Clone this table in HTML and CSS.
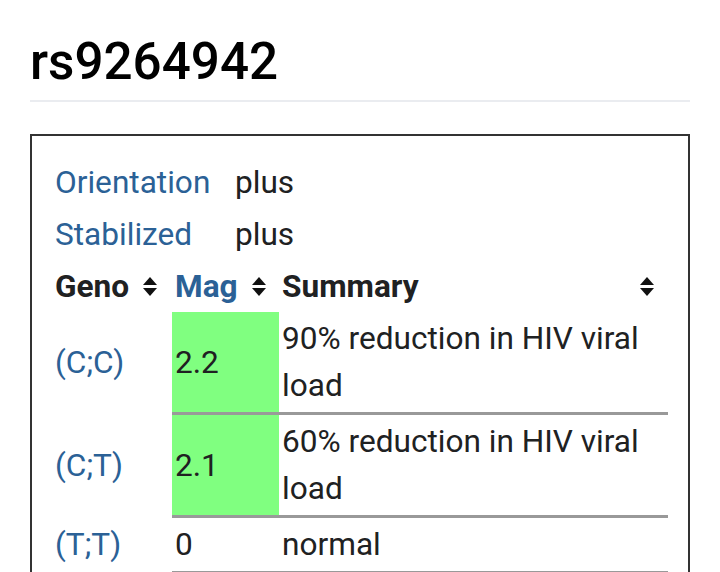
FILE: index.html
```html
<!DOCTYPE html>
<html>
<head>
<meta charset="utf-8">
<link rel="stylesheet" href="styles.css">
</head>
<body>
<h1 class="title">rs9264942</h1>
<div class="box">
  <div class="info">
    <a class="link label">Orientation</a><span class="val">plus</span>
    <a class="link label">Stabilized</a><span class="val">plus</span>
  </div>
  <table class="geno-table">
    <thead>
      <tr>
        <th class="c-geno"><span class="th-in">Geno <span class="sort"></span></span></th>
        <th class="c-mag"><span class="th-in"><a class="link">Mag</a> <span class="sort"></span></span></th>
        <th class="c-sum"><span class="th-in th-wide">Summary <span class="sort"></span></span></th>
      </tr>
    </thead>
    <tbody>
      <tr>
        <td class="c-geno"><a class="link">(C;C)</a></td>
        <td class="c-mag good">2.2</td>
        <td class="c-sum">90% reduction in HIV viral load</td>
      </tr>
      <tr>
        <td class="c-geno"><a class="link">(C;T)</a></td>
        <td class="c-mag good">2.1</td>
        <td class="c-sum">60% reduction in HIV viral load</td>
      </tr>
      <tr>
        <td class="c-geno"><a class="link">(T;T)</a></td>
        <td class="c-mag">0</td>
        <td class="c-sum">normal</td>
      </tr>
    </tbody>
  </table>
</div>
</body>
</html>
```
FILE: styles.css
```css
html, body { margin: 0; padding: 0; background: #fff; }
body {
  font-family: Roboto, "Noto Sans", sans-serif;
  color: #202122;
  padding: 0 30px;
  font-size: 31.6px;
}
.title {
  font-weight: 500;
  font-size: 51.2px;
  line-height: 60px;
  margin: 0;
  padding: 32px 0 8px;
  border-bottom: 2px solid #eaecf0;
  color: #000;
}
.box {
  margin-top: 32px;
  border: 2px solid #333;
  border-bottom: none;
  padding: 20px 20px 0 23px;
  height: 480px;
}
.link { color: #2b6196; text-decoration: none; }
.info {
  display: grid;
  grid-template-columns: 180px auto;
  grid-auto-rows: 52px;
  align-items: center;
}
.geno-table {
  border-collapse: collapse;
  width: 616px;
  margin-left: -3px;
}
.geno-table th {
  font-weight: bold;
  text-align: left;
  padding: 0 3px;
  height: 52px;
}
.th-in { display: flex; align-items: center; gap: 14px; }
.th-wide { justify-content: space-between; padding-right: 10px; }
.sort {
  display: inline-block;
  width: 15px;
  height: 19px;
  position: relative;
}
.sort::before, .sort::after {
  content: "";
  position: absolute;
  left: 0;
  border-left: 7.5px solid transparent;
  border-right: 7.5px solid transparent;
}
.sort::before { top: 0; border-bottom: 8px solid #111; }
.sort::after { bottom: 0; border-top: 8px solid #111; }
.geno-table td {
  padding: 3px 3px;
  line-height: 47px;
  vertical-align: middle;
}
.c-geno { width: 114px; }
.c-mag { width: 101px; }
.geno-table td.c-mag, .geno-table td.c-sum { border-bottom: 3px solid #999; }
.good { background: #80ff80; }
```
